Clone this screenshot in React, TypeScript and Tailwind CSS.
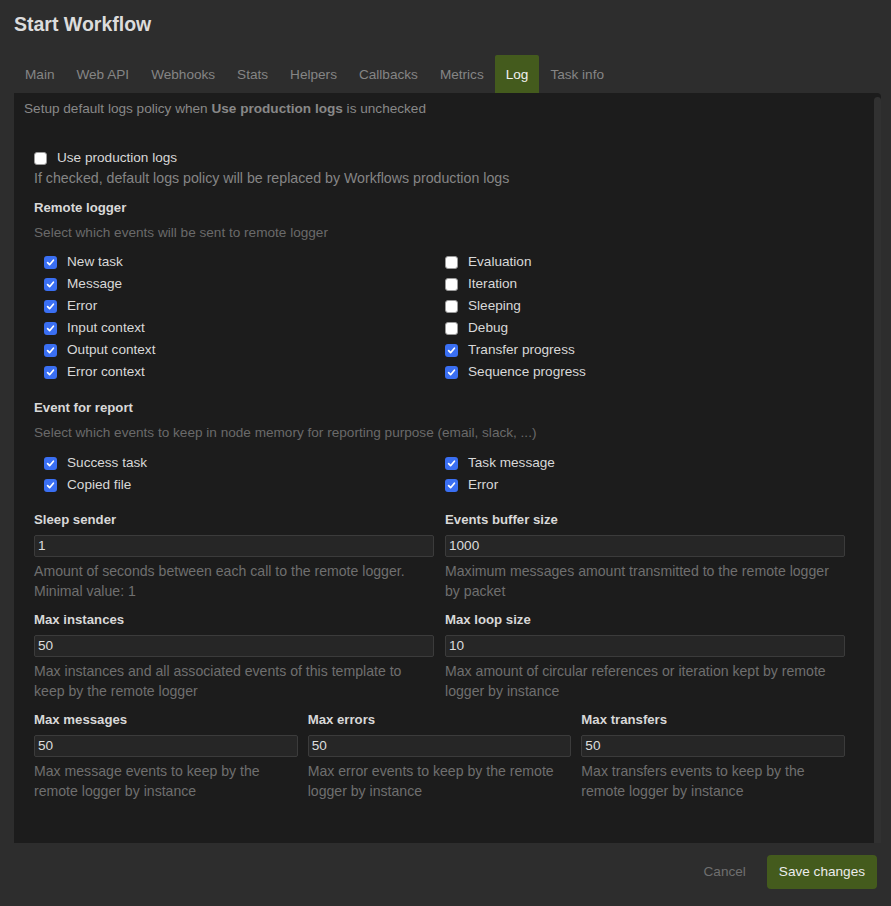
import React from 'react'

const tabs = ['Main', 'Web API', 'Webhooks', 'Stats', 'Helpers', 'Callbacks', 'Metrics', 'Log', 'Task info']

function Check({ checked }: { checked: boolean }) {
  if (checked) {
    return (
      <span className="flex h-[13px] w-[13px] shrink-0 items-center justify-center rounded-[3px] bg-[#3a6ff3]">
        <svg width="9" height="9" viewBox="0 0 9 9" fill="none">
          <path d="M1.6 4.7 L3.6 6.7 L7.4 2.2" stroke="white" strokeWidth="1.7" strokeLinecap="round" strokeLinejoin="round" />
        </svg>
      </span>
    )
  }
  return <span className="h-[13px] w-[13px] shrink-0 rounded-[3px] border border-[#9a9a9a] bg-white" />
}

function CheckRow({ label, checked }: { label: string; checked: boolean }) {
  return (
    <div className="flex h-[22px] items-center gap-[10px]">
      <Check checked={checked} />
      <span className="text-[#d8d8d8]">{label}</span>
    </div>
  )
}

function Field({ label, value, help }: { label: string; value: string; help: React.ReactNode }) {
  return (
    <div>
      <div className="text-[13.2px] font-bold text-[#d8d8d8]">{label}</div>
      <div className="mt-[5px] h-[22px] rounded-[2px] border border-[#3b3b3b] bg-[#262626] pl-[3px] leading-[20px] text-[#dcdcdc]">
        {value}
      </div>
      <div className="mt-[4px] text-[14.1px] text-[#6f6f6f]">{help}</div>
    </div>
  )
}

export default function App() {
  return (
    <div
      className="flex h-[906px] w-[891px] flex-col bg-[#2d2d2d] text-[13.6px] leading-[20px]"
      style={{ fontFamily: '"Liberation Sans", Arial, sans-serif' }}
    >
      <div className="px-[14px] pt-[12px] text-[19.5px] font-bold leading-[24px] text-[#dcdcdc]">Start Workflow</div>

      <div className="mt-[19px] flex px-[14px]">
        {tabs.map((t) => (
          <div
            key={t}
            className={`flex h-[38px] items-center rounded-t-[2px] px-[11px] pt-[2px] ${
              t === 'Log' ? 'bg-[#445b1d] text-[#f0f0f0]' : 'text-[#858585]'
            }`}
          >
            {t}
          </div>
        ))}
      </div>

      <div className="ml-[14px] mr-[10px] flex h-[750px] rounded-tr-[4px] bg-[#1c1c1c]">
        <div className="flex-1 pl-[10px] pt-[6px]">
          <div className="text-[#888]">
            Setup default logs policy when <span className="font-bold">Use production logs</span> is unchecked
          </div>

          <div className="mt-[29px] pl-[10px] pr-[29px]">
            <div className="flex items-center gap-[10px]">
              <Check checked={false} />
              <span className="text-[#d8d8d8]">Use production logs</span>
            </div>
            <div className="text-[14.2px] text-[#858585]">
              If checked, default logs policy will be replaced by Workflows production logs
            </div>

            <div className="mt-[10px] text-[13.2px] font-bold text-[#d8d8d8]">Remote logger</div>
            <div className="mt-[5px] text-[#6a6a6a]">Select which events will be sent to remote logger</div>
            <div className="mt-[8px] grid grid-cols-2 gap-x-[11px]">
              <div className="pl-[10px]">
                <CheckRow label="New task" checked />
                <CheckRow label="Message" checked />
                <CheckRow label="Error" checked />
                <CheckRow label="Input context" checked />
                <CheckRow label="Output context" checked />
                <CheckRow label="Error context" checked />
              </div>
              <div>
                <CheckRow label="Evaluation" checked={false} />
                <CheckRow label="Iteration" checked={false} />
                <CheckRow label="Sleeping" checked={false} />
                <CheckRow label="Debug" checked={false} />
                <CheckRow label="Transfer progress" checked />
                <CheckRow label="Sequence progress" checked />
              </div>
            </div>

            <div className="mt-[15px] text-[13.2px] font-bold text-[#d8d8d8]">Event for report</div>
            <div className="mt-[5px] text-[#6a6a6a]">
              Select which events to keep in node memory for reporting purpose (email, slack, ...)
            </div>
            <div className="mt-[9px] grid grid-cols-2 gap-x-[11px]">
              <div className="pl-[10px]">
                <CheckRow label="Success task" checked />
                <CheckRow label="Copied file" checked />
              </div>
              <div>
                <CheckRow label="Task message" checked />
                <CheckRow label="Error" checked />
              </div>
            </div>

            <div className="mt-[14px] grid grid-cols-2 gap-x-[11px] gap-y-[9px]">
              <Field
                label="Sleep sender"
                value="1"
                help={
                  <>
                    Amount of seconds between each call to the remote logger.
                    <br />
                    Minimal value: 1
                  </>
                }
              />
              <Field
                label="Events buffer size"
                value="1000"
                help="Maximum messages amount transmitted to the remote logger by packet"
              />
              <Field
                label="Max instances"
                value="50"
                help="Max instances and all associated events of this template to keep by the remote logger"
              />
              <Field
                label="Max loop size"
                value="10"
                help="Max amount of circular references or iteration kept by remote logger by instance"
              />
            </div>

            <div className="mt-[9px] grid grid-cols-3 gap-x-[10px]">
              <Field label="Max messages" value="50" help="Max message events to keep by the remote logger by instance" />
              <Field label="Max errors" value="50" help="Max error events to keep by the remote logger by instance" />
              <Field label="Max transfers" value="50" help="Max transfers events to keep by the remote logger by instance" />
            </div>
          </div>
        </div>
        <div className="mt-[4px] w-[7px] rounded-t-[4px] bg-[#313131]" />
      </div>

      <div className="flex flex-1 items-start justify-end pr-[14px] pt-[12px]">
        <span className="mr-[21px] mt-[7px] text-[#6f6f6f]">Cancel</span>
        <button className="h-[34px] rounded-[4px] bg-[#445b1d] px-[12px] text-[#ececec]">Save changes</button>
      </div>
    </div>
  )
}
